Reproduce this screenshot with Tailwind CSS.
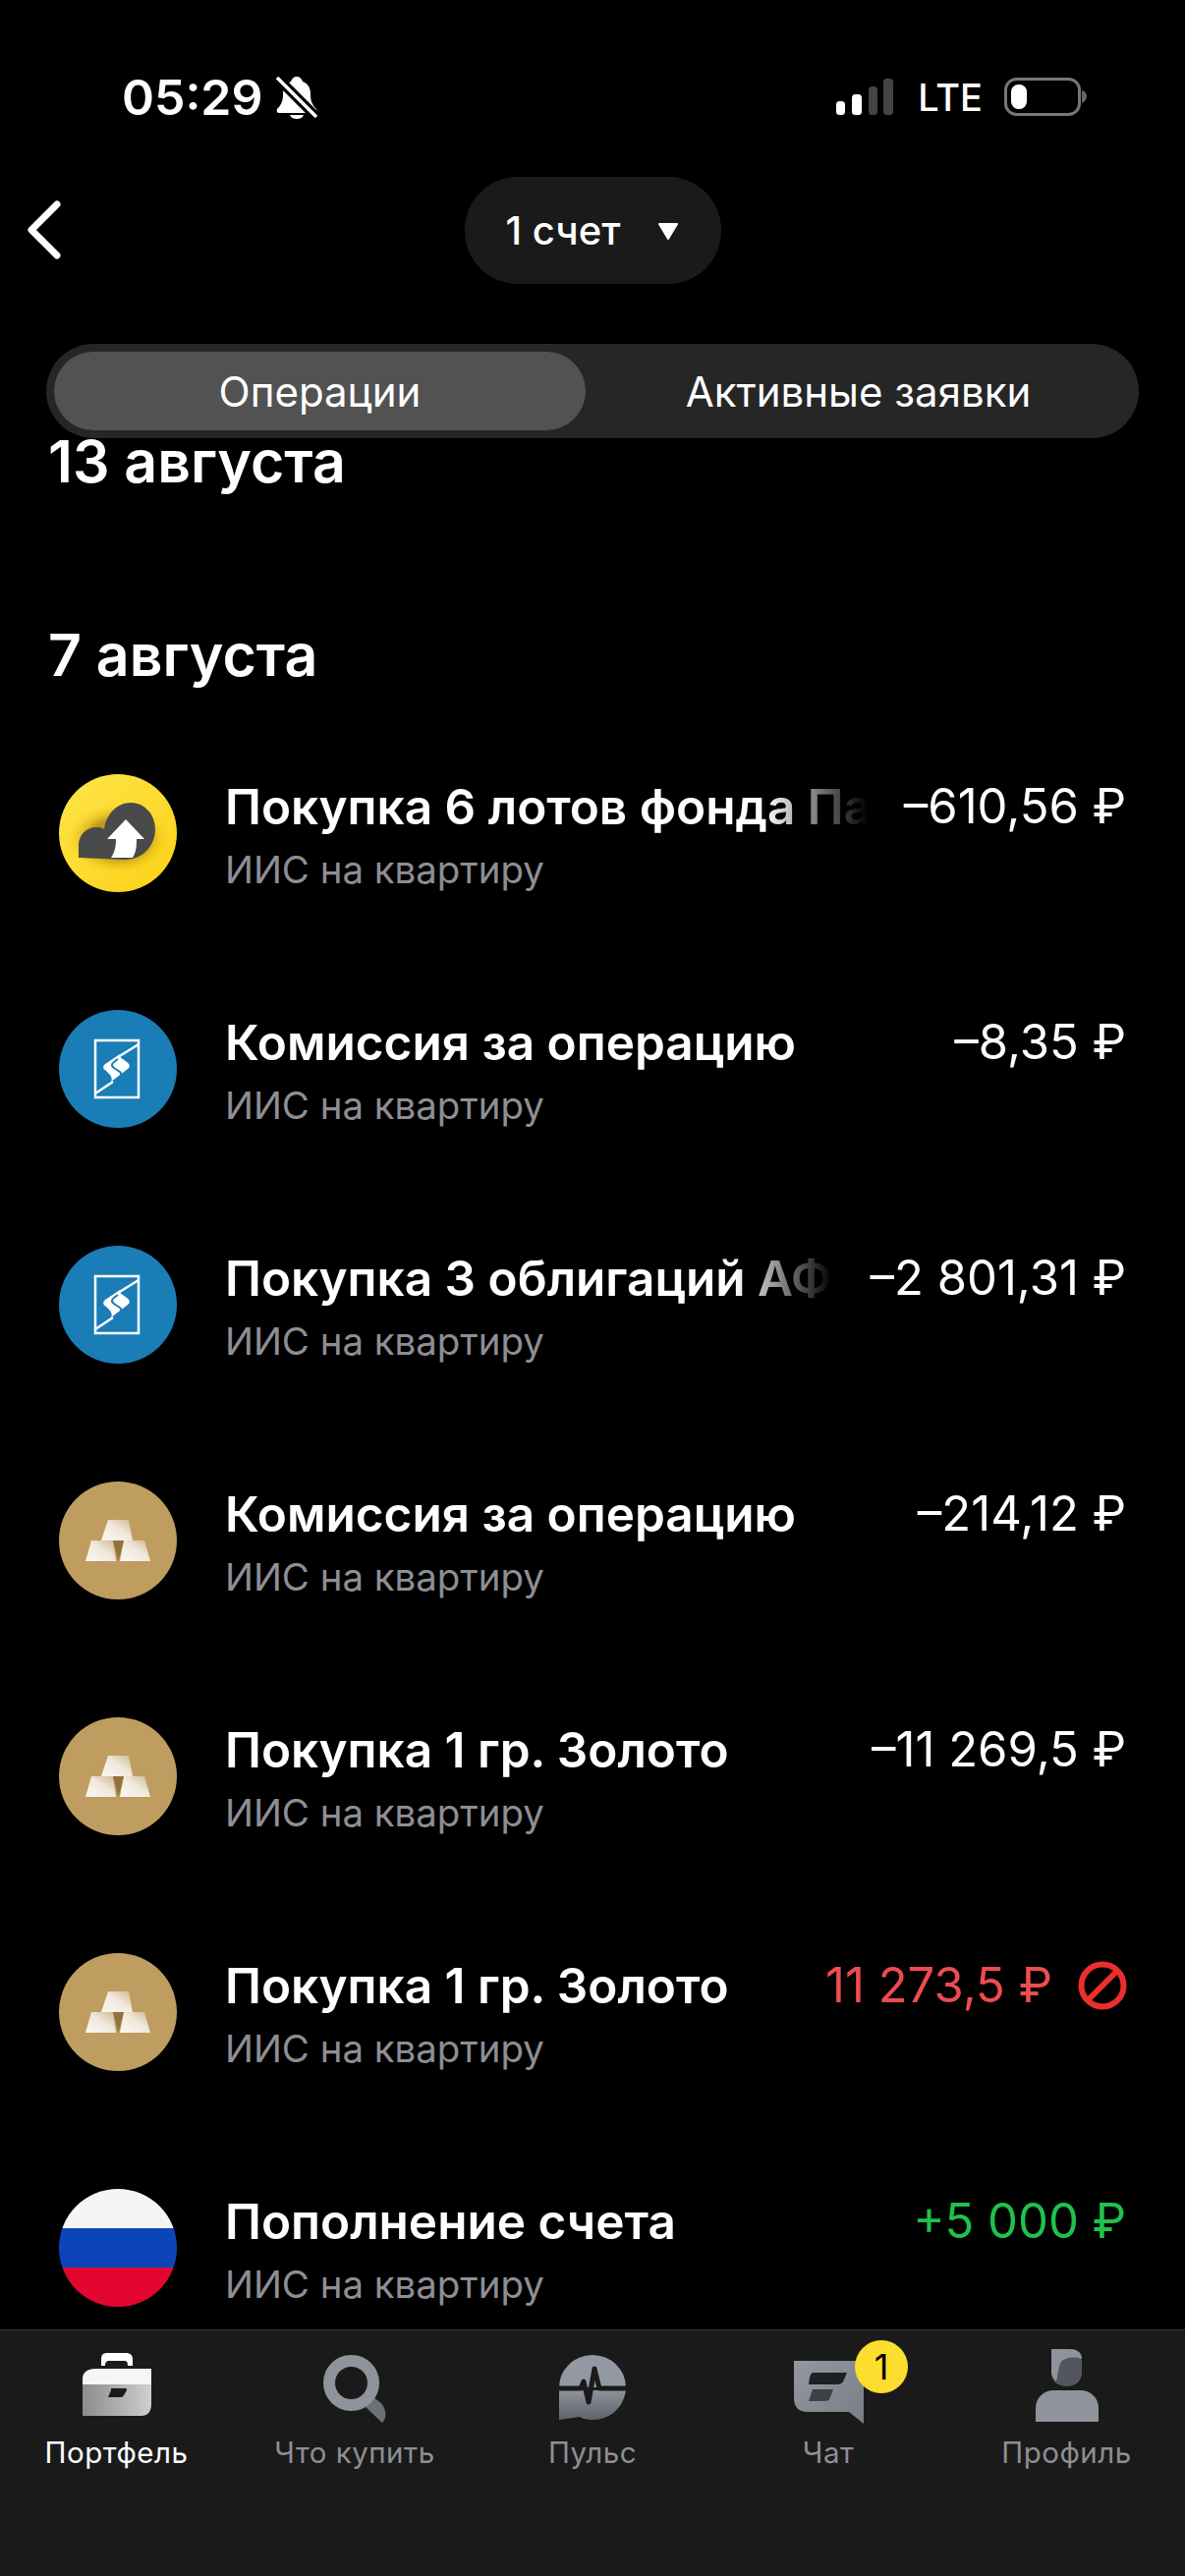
<!DOCTYPE html>
<html lang="en">
<head>
    <meta charset="UTF-8">
    <title>Операции</title>
    <script src="https://cdn.jsdelivr.net/npm/@tailwindcss/browser@4"></script>
</head>
<body class="bg-black">
<div class="w-[1206px] h-[2622px] relative overflow-hidden bg-black text-white font-['Inter','Roboto',sans-serif]">

    <!-- status bar -->
    <div class="h-[180px] pt-[70px] pl-[124px] pr-[100px] flex justify-between items-start">
        <div class="flex items-center gap-[13px] h-[58px]">
            <span class="text-[50px] font-semibold leading-none">05:29</span>
            <svg width="42" height="44" viewBox="0 0 42 44">
                <path d="M21 1c3 0 5 2 6 5 6 2 8 7 8 13 0 7 2 11 6 15 1 2 0 4-2 4H3c-2 0-3-2-2-4 4-4 6-8 6-15 0-6 2-11 8-13 1-3 3-5 6-5z" fill="#fff"/>
                <path d="M14 40h14c-1 3-4 4-7 4s-6-1-7-4z" fill="#fff"/>
                <path d="M1 2 41 42" stroke="#000" stroke-width="10"/>
                <path d="M1 2 41 42" stroke="#fff" stroke-width="3.500"/>
            </svg>
        </div>
        <div class="flex items-center h-[58px]">
            <svg width="58" height="38" viewBox="0 0 58 38">
                <rect x="0" y="23" width="9" height="14" rx="3.500" fill="#fff"/>
                <rect x="16" y="16" width="10" height="21" rx="3.500" fill="#fff"/>
                <rect x="33" y="8" width="9" height="29" rx="3.500" fill="#444"/>
                <rect x="48" y="0" width="10" height="37" rx="3.500" fill="#444"/>
            </svg>
            <span class="ml-[25px] text-[38px] font-medium leading-none">LTE</span>
            <svg class="ml-[22px]" width="84" height="40" viewBox="0 0 84 40">
                <rect x="1.500" y="1.500" width="75" height="36" rx="11" fill="none" stroke="#777" stroke-width="3"/>
                <rect x="7" y="7" width="16" height="25" rx="7.500" fill="#fff"/>
                <path d="M79 13c4 1 5 4 5 6s-1 5-5 7z" fill="#666"/>
            </svg>
        </div>
    </div>

    <!-- header -->
    <div class="relative h-[109px] flex justify-center">
        <svg class="absolute left-[26px] top-[24px]" width="38" height="60" viewBox="0 0 38 60">
            <path d="M32 4 6 30l26 26" fill="none" stroke="#fff" stroke-width="7" stroke-linecap="round" stroke-linejoin="round"/>
        </svg>
        <div class="w-[261px] h-[109px] rounded-[54px] bg-[#1a1a1a] flex items-center pl-[42px] gap-[38px]">
            <span class="text-[40px] font-medium leading-none">1 счет</span>
            <svg width="22" height="18" viewBox="0 0 22 18"><path d="M2 2h18l-9 15z" fill="#fff" stroke="#fff" stroke-width="2" stroke-linejoin="round"/></svg>
        </div>
    </div>

    <!-- tabs -->
    <div class="mt-[61px] mx-[47px] w-[1112px] h-[96px] rounded-[48px] bg-[#262626] flex p-[8px] text-[42px]">
        <div class="w-[541px] rounded-[42px] bg-[#525252] flex items-center justify-center">Операции</div>
        <div class="flex-1 flex items-center justify-center">Активные заявки</div>
    </div>

    <!-- operations -->
    <div class="pl-[49px] text-[59px] font-semibold leading-none -mt-[6px]">
        <div class="h-[50px]">13 августа</div>
        <div class="mt-[147px]">7 августа</div>
    </div>

    <div class="mt-[92px]">
        <div class="h-[240px] flex pl-[60px] pr-[60px]">
            <svg class="shrink-0" width="120" height="120" viewBox="0 0 120 120">
                <defs>
                    <linearGradient id="yl" x1="0" y1="0" x2="1" y2="1"><stop offset="0" stop-color="#fde54a"/><stop offset="1" stop-color="#fdd116"/></linearGradient>
                    <radialGradient id="ysh" cx=".5" cy=".5" r=".5"><stop offset=".55" stop-color="#a8860e" stop-opacity=".75"/><stop offset="1" stop-color="#fdd116" stop-opacity="0"/></radialGradient>
                </defs>
                <circle cx="60" cy="60" r="60" fill="url(#yl)"/>
                <ellipse cx="60" cy="66" rx="52" ry="36" fill="url(#ysh)"/>
                <path d="M20 85V72c0-10 8-18 18-18 3 0 5 0 8 2 2-16 14-27 27-27 14 0 25 12 25 27 0 15-11 31-31 31z" fill="#4a4a4a"/>
                <path d="M53 85c3-4 5-10 5-19H49l19-20 19 20h-8v2c0 7-1 12-4 17z" fill="#fff"/>
            </svg>
            <div class="ml-[49px] w-[654px] overflow-hidden">
                <div class="mt-[5px] text-[49.500px] font-semibold leading-[56px] whitespace-nowrap [mask-image:linear-gradient(to_right,black_84%,transparent)]">Покупка 6 лотов фонда Пассивный</div>
                <div class="text-[38.400px] leading-[46px] mt-[13px] text-[#8e8e93]">ИИС на квартиру</div>
            </div>
            <div class="flex-1 mt-[5px] text-right text-[49px] leading-[56px] whitespace-nowrap">–610,56 ₽</div>
        </div>

        <div class="h-[240px] flex pl-[60px] pr-[60px]">
            <svg class="shrink-0" width="120" height="120" viewBox="0 0 120 120">
                <circle cx="60" cy="60" r="60" fill="#1a7db5"/>
                <path d="M37 31h44v58H37z" fill="none" stroke="#fff" stroke-width="2.500"/>
                <path d="M81 35 60 48M37 85l18-12" stroke="#fff" stroke-width="2.500"/>
                <path d="M62 45 47 55c-3 3-2 5 1 7l4 4c2 3 2 5 1 7l17-13c3-2 2-5-1-7l-4-3c-3-2-4-3-3-5z" fill="#fff"/>
                <path d="M60 50c-6 4-8 6-4 9l6 4c2 2 2 4 0 6" fill="none" stroke="#1a7db5" stroke-width="2"/>
            </svg>
            <div class="ml-[49px] w-[654px] overflow-hidden">
                <div class="mt-[5px] text-[49.500px] font-semibold leading-[56px] whitespace-nowrap">Комиссия за операцию</div>
                <div class="text-[38.400px] leading-[46px] mt-[13px] text-[#8e8e93]">ИИС на квартиру</div>
            </div>
            <div class="flex-1 mt-[5px] text-right text-[49px] leading-[56px] whitespace-nowrap">–8,35 ₽</div>
        </div>

        <div class="h-[240px] flex pl-[60px] pr-[60px]">
            <svg class="shrink-0" width="120" height="120" viewBox="0 0 120 120">
                <circle cx="60" cy="60" r="60" fill="#1a7db5"/>
                <path d="M37 31h44v58H37z" fill="none" stroke="#fff" stroke-width="2.500"/>
                <path d="M81 35 60 48M37 85l18-12" stroke="#fff" stroke-width="2.500"/>
                <path d="M62 45 47 55c-3 3-2 5 1 7l4 4c2 3 2 5 1 7l17-13c3-2 2-5-1-7l-4-3c-3-2-4-3-3-5z" fill="#fff"/>
                <path d="M60 50c-6 4-8 6-4 9l6 4c2 2 2 4 0 6" fill="none" stroke="#1a7db5" stroke-width="2"/>
            </svg>
            <div class="ml-[49px] w-[618px] overflow-hidden">
                <div class="mt-[5px] text-[49.500px] font-semibold leading-[56px] whitespace-nowrap [mask-image:linear-gradient(to_right,black_84%,transparent)]">Покупка 3 облигаций АФК Система</div>
                <div class="text-[38.400px] leading-[46px] mt-[13px] text-[#8e8e93]">ИИС на квартиру</div>
            </div>
            <div class="flex-1 mt-[5px] text-right text-[49px] leading-[56px] whitespace-nowrap">–2 801,31 ₽</div>
        </div>

        <div class="h-[240px] flex pl-[60px] pr-[60px]">
            <svg class="shrink-0" width="120" height="120" viewBox="0 0 120 120">
                <defs>
                    <linearGradient id="gd" x1="0" y1="1" x2="1" y2="0"><stop offset="0" stop-color="#fbf8f2"/><stop offset=".55" stop-color="#f0e8da"/><stop offset="1" stop-color="#cdb68c"/></linearGradient>
                </defs>
                <circle cx="60" cy="60" r="60" fill="#bf9d60"/>
                <path d="M50 39h21l4 21H43z" fill="url(#gd)"/>
                <path d="M33 60h22l3 21H27z" fill="url(#gd)"/>
                <path d="M66 60h21l6 21H62z" fill="url(#gd)"/>
                <path d="M55 60h11l-5.500 21z" fill="#8f7240"/>
            </svg>
            <div class="ml-[49px] w-[654px] overflow-hidden">
                <div class="mt-[5px] text-[49.500px] font-semibold leading-[56px] whitespace-nowrap">Комиссия за операцию</div>
                <div class="text-[38.400px] leading-[46px] mt-[13px] text-[#8e8e93]">ИИС на квартиру</div>
            </div>
            <div class="flex-1 mt-[5px] text-right text-[49px] leading-[56px] whitespace-nowrap">–214,12 ₽</div>
        </div>

        <div class="h-[240px] flex pl-[60px] pr-[60px]">
            <svg class="shrink-0" width="120" height="120" viewBox="0 0 120 120">
                <circle cx="60" cy="60" r="60" fill="#bf9d60"/>
                <path d="M50 39h21l4 21H43z" fill="url(#gd)"/>
                <path d="M33 60h22l3 21H27z" fill="url(#gd)"/>
                <path d="M66 60h21l6 21H62z" fill="url(#gd)"/>
                <path d="M55 60h11l-5.500 21z" fill="#8f7240"/>
            </svg>
            <div class="ml-[49px] w-[654px] overflow-hidden">
                <div class="mt-[5px] text-[49.500px] font-semibold leading-[56px] whitespace-nowrap">Покупка 1 гр. Золото</div>
                <div class="text-[38.400px] leading-[46px] mt-[13px] text-[#8e8e93]">ИИС на квартиру</div>
            </div>
            <div class="flex-1 mt-[5px] text-right text-[49px] leading-[56px] whitespace-nowrap">–11 269,5 ₽</div>
        </div>

        <div class="h-[240px] flex pl-[60px] pr-[60px]">
            <svg class="shrink-0" width="120" height="120" viewBox="0 0 120 120">
                <circle cx="60" cy="60" r="60" fill="#bf9d60"/>
                <path d="M50 39h21l4 21H43z" fill="url(#gd)"/>
                <path d="M33 60h22l3 21H27z" fill="url(#gd)"/>
                <path d="M66 60h21l6 21H62z" fill="url(#gd)"/>
                <path d="M55 60h11l-5.500 21z" fill="#8f7240"/>
            </svg>
            <div class="ml-[49px] w-[580px] overflow-hidden">
                <div class="mt-[5px] text-[49.500px] font-semibold leading-[56px] whitespace-nowrap">Покупка 1 гр. Золото</div>
                <div class="text-[38.400px] leading-[46px] mt-[13px] text-[#8e8e93]">ИИС на квартиру</div>
            </div>
            <div class="flex-1 mt-[5px] flex justify-end h-[56px] items-center gap-[26px] text-[49px] leading-[56px] text-[#ed4c50] whitespace-nowrap">
                <span>11 273,5 ₽</span>
                <svg class="shrink-0 -mr-[1px]" width="50" height="50" viewBox="0 0 50 50">
                    <circle cx="25" cy="25" r="21.500" fill="none" stroke="#ee2d2d" stroke-width="6"/>
                    <path d="M40 10 10 40" stroke="#ee2d2d" stroke-width="6"/>
                </svg>
            </div>
        </div>

        <div class="h-[240px] flex pl-[60px] pr-[60px]">
            <svg class="shrink-0" width="120" height="120" viewBox="0 0 120 120">
                <clipPath id="fl"><circle cx="60" cy="60" r="60"/></clipPath>
                <g clip-path="url(#fl)">
                    <rect width="120" height="40" fill="#f5f5f5"/>
                    <rect y="40" width="120" height="40" fill="#0b45b8"/>
                    <rect y="80" width="120" height="40" fill="#e3062f"/>
                </g>
            </svg>
            <div class="ml-[49px] w-[654px] overflow-hidden">
                <div class="mt-[5px] text-[49.500px] font-semibold leading-[56px] whitespace-nowrap">Пополнение счета</div>
                <div class="text-[38.400px] leading-[46px] mt-[13px] text-[#8e8e93]">ИИС на квартиру</div>
            </div>
            <div class="flex-1 mt-[5px] text-right text-[49px] leading-[56px] text-[#1fc24c] whitespace-nowrap">+5 000 ₽</div>
        </div>
    </div>

    <!-- tab bar -->
    <div class="absolute left-0 right-0 top-[2371px] bottom-0 bg-[#1a1a1a] border-t border-[#333] flex text-[29.500px] leading-[36px] tracking-[0.5px] text-[#8e8e93]">
        <div class="w-[237px] flex flex-col items-center pt-[22px]">
            <div class="h-[72px]">
                <svg class="mt-[1px]" width="70" height="64" viewBox="0 0 70 64">
                    <defs>
                        <linearGradient id="brf" x1="0" y1="0" x2="1" y2="0"><stop offset="0" stop-color="#8c8c8c"/><stop offset="1" stop-color="#cfcfcf"/></linearGradient>
                        <linearGradient id="pul" x1="0" y1="0" x2="0" y2="1"><stop offset="0" stop-color="#8e939c"/><stop offset="1" stop-color="#5f636a"/></linearGradient>
                        <linearGradient id="cht" x1="0" y1="0" x2="1" y2="1"><stop offset="0" stop-color="#9398a1"/><stop offset="1" stop-color="#797d85"/></linearGradient>
                    </defs>
                    <path d="M19 13V6c0-4 2-6 6-6h19c4 0 7 2 7 6v7h-5c0-4-1-5-4-5H27c-2 0-4 1-4 5z" fill="#fff"/>
                    <path d="M0 32v-6c0-6 5-10 13-10h57v16z" fill="#f5f6f7"/>
                    <path d="M0 32h70v20c0 8-4 12-10 12H0z" fill="url(#brf)"/>
                    <path d="M29 36h15c1 0 1 1 1 2l-3 5c-1 2-2 2-4 2H26l3-7z" fill="#1a1a1a"/>
                </svg>
            </div>
            <span class="mt-[12px] text-white">Портфель</span>
        </div>
        <div class="w-[248px] flex flex-col items-center pt-[22px]">
            <div class="h-[72px]">
                <svg class="mt-[3px]" width="64" height="70" viewBox="0 0 64 70">
                    <path d="M43 53c3-2 6-6 7-10 8 4 13 9 13.500 17 0 4-1.500 7-3.500 9z" fill="#6c6f75"/>
                    <circle cx="28.500" cy="28.500" r="22.500" fill="none" stroke="#8e939c" stroke-width="12"/>
                </svg>
            </div>
            <span class="mt-[12px]">Что купить</span>
        </div>
        <div class="w-[236px] flex flex-col items-center pt-[22px]">
            <div class="h-[72px]">
                <svg class="mt-[3px]" width="68" height="66" viewBox="0 0 68 66">
                    <path d="M0 33a34 33 0 0 1 68 0z" fill="#9399a3"/>
                    <path d="M0 36h68c-3 19-17 30-34 30-6 0-10-1-13-3L0 66z" fill="url(#pul)"/>
                    <path d="M-2 34h24l3-7 5 21 6-34 5 20h29" fill="none" stroke="#1a1a1a" stroke-width="5" stroke-linejoin="round"/>
                </svg>
            </div>
            <span class="mt-[12px]">Пульс</span>
        </div>
        <div class="relative w-[244px] flex flex-col items-center pt-[22px]">
            <div class="h-[72px]">
                <svg class="mt-[9px]" width="71" height="64" viewBox="0 0 71 64">
                    <path d="M0 0h71v64L56 52H14C5 52 0 47 0 38z" fill="url(#cht)"/>
                    <path d="M20 12h34l-3 7c-1 4-4 5-7 5H15c1-6 1-12 5-12z" fill="#1f2023"/>
                    <path d="M19 29h21l-3 8c-1 3-3 4-6 4H15z" fill="#3e4045"/>
                </svg>
            </div>
            <span class="mt-[12px]">Чат</span>
            <div class="absolute left-[149px] top-[10px] w-[54px] h-[54px] rounded-full bg-[#fddd2d] flex items-center justify-center text-black text-[36px] leading-none tracking-normal">1</div>
        </div>
        <div class="flex-1 flex flex-col items-center pt-[22px]">
            <div class="h-[72px]">
                <svg class="-mt-[3px]" width="64" height="74" viewBox="0 0 64 74">
                    <path d="M16 0h17c9 0 14 3 14 12v12c0 9-7 14-15 14-9 0-16-5-16-14z" fill="#53565c"/>
                    <path d="M16 0h17c9 0 14 3 14 10-9-3-20-1-22 5-2 5-2 10-4 18-3-3-5-6-5-9z" fill="#8e939c"/>
                    <path d="M0 74V60c0-11 9-18 18-18h28c9 0 18 7 18 18v14z" fill="#8e939c"/>
                </svg>
            </div>
            <span class="mt-[12px]">Профиль</span>
        </div>
    </div>
</div>
</body>
</html>
